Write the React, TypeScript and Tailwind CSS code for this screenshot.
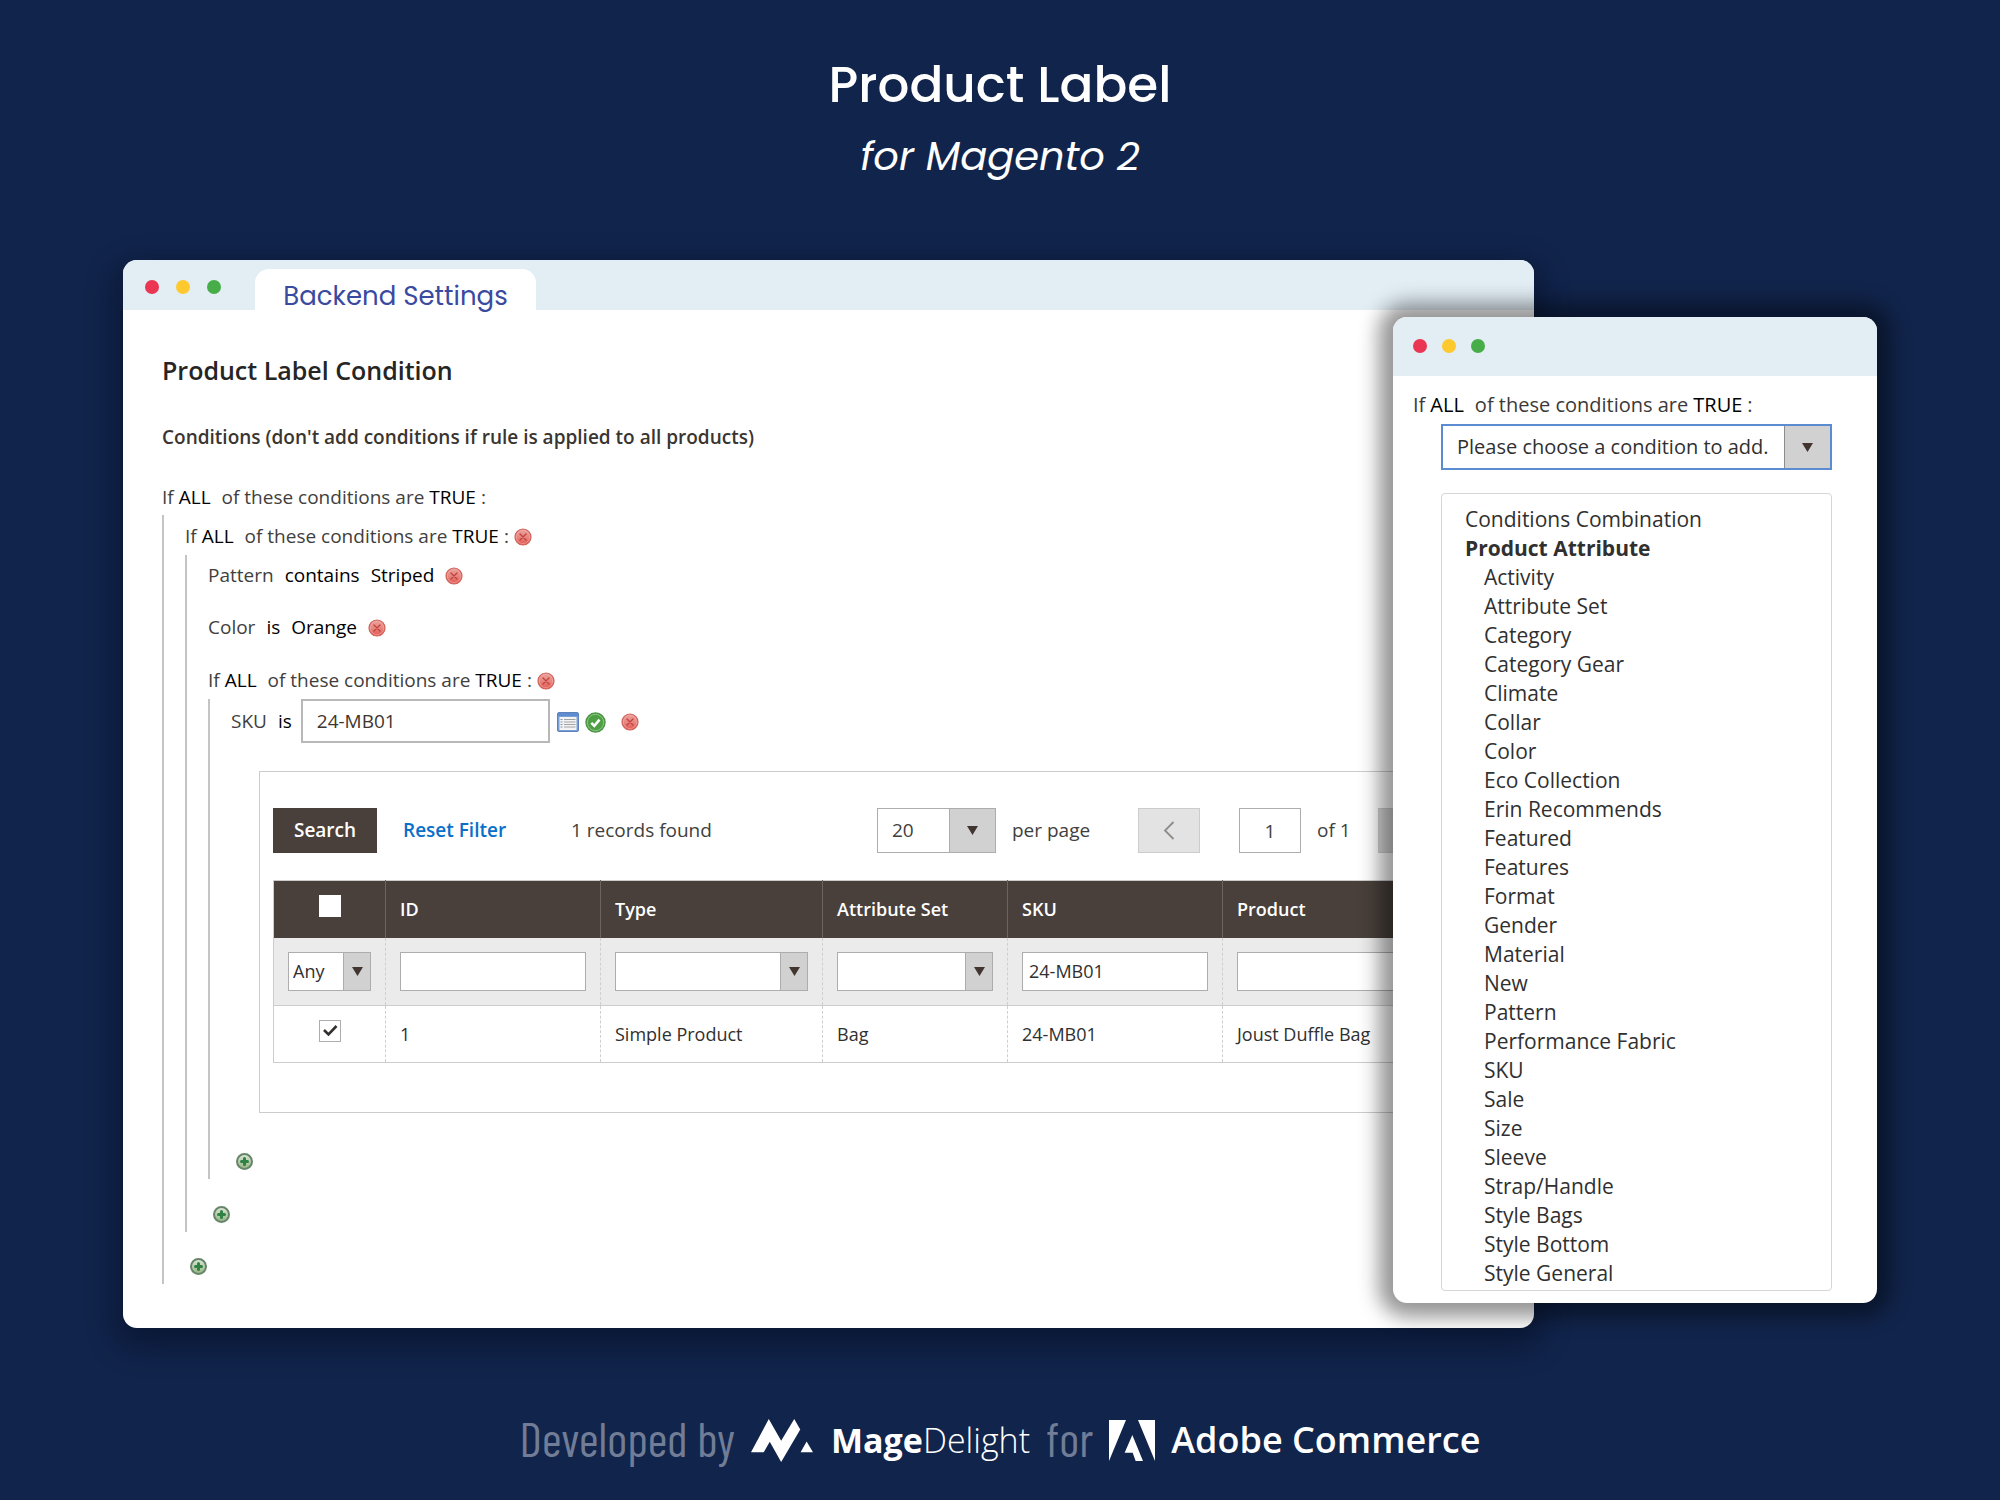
import React from 'react';

const attributes = [
  'Activity', 'Attribute Set', 'Category', 'Category Gear', 'Climate', 'Collar', 'Color',
  'Eco Collection', 'Erin Recommends', 'Featured', 'Features', 'Format', 'Gender', 'Material',
  'New', 'Pattern', 'Performance Fabric', 'SKU', 'Sale', 'Size', 'Sleeve', 'Strap/Handle',
  'Style Bags', 'Style Bottom', 'Style General',
];

function Dots({ className }: { className: string }) {
  return (
    <div className={`flex ${className}`}>
      <span className="size-3.5 rounded-full bg-[#ea3553]" />
      <span className="size-3.5 rounded-full bg-[#fdc92e]" />
      <span className="size-3.5 rounded-full bg-[#47ad48]" />
    </div>
  );
}

function RemoveButton({ className = '' }: { className?: string }) {
  return (
    <button type="button" aria-label="Remove" className={`shrink-0 pt-0.5 ${className}`}>
      <svg width="18" height="18" viewBox="0 0 18 18" className="block">
        <defs>
          <linearGradient id="removeFill" x1="0" y1="0" x2="0" y2="1">
            <stop offset="0" stopColor="#e9a39d" />
            <stop offset="0.5" stopColor="#e88680" />
            <stop offset="1" stopColor="#e0564f" />
          </linearGradient>
        </defs>
        <circle cx="9" cy="9" r="8" fill="url(#removeFill)" stroke="#d0625c" strokeWidth="1.2" />
        <circle cx="9" cy="9" r="6.6" fill="none" stroke="#f3aaa6" strokeWidth="0.6" />
        <path d="M6 6l6 6M12 6l-6 6" stroke="#c0403c" strokeWidth="1.3" strokeLinecap="round" />
      </svg>
    </button>
  );
}

function AddButton({ className }: { className: string }) {
  return (
    <button type="button" aria-label="Add condition" className={`block ${className}`}>
      <svg width="17" height="17" viewBox="0 0 17 17" className="block">
        <defs>
          <linearGradient id="addFill" x1="0" y1="0" x2="0" y2="1">
            <stop offset="0" stopColor="#dfe8da" />
            <stop offset="1" stopColor="#93b37f" />
          </linearGradient>
        </defs>
        <circle cx="8.5" cy="8.5" r="7.5" fill="url(#addFill)" stroke="#66866a" strokeWidth="2" />
        <path d="M8.5 5.500v6M5.500 8.500h6" stroke="#2f8245" strokeWidth="3" strokeLinecap="round" />
      </svg>
    </button>
  );
}

function Caret() {
  return (
    <svg width="11" height="9" viewBox="0 0 11 9">
      <path d="M0 0h11L5.500 9z" fill="#41362f" />
    </svg>
  );
}

type SelectProps = {
  label: string;
  value: string;
  box: string;
  field: string;
  caret: string;
};

function Select({ label, value, box, field, caret }: SelectProps) {
  return (
    <div className={`relative flex ${box}`}>
      <select aria-label={label} defaultValue={value} className={`h-full w-full appearance-none bg-white outline-none ${field}`}>
        <option>{value}</option>
      </select>
      <span className={`pointer-events-none absolute inset-y-0 right-0 flex items-center justify-center border-l bg-[#d1d1d1] ${caret}`}>
        <Caret />
      </span>
    </div>
  );
}

function Param({ children }: { children: React.ReactNode }) {
  return <a href="#" className="text-black">{children}</a>;
}

function Combine({ className, removable = true }: { className: string; removable?: boolean }) {
  return (
    <div className={`flex items-center whitespace-nowrap ${className}`}>
      <span className="mr-[5px]">If</span>
      <Param>ALL</Param>
      <span className="mr-[5px] ml-[11px]">of these conditions are</span>
      <Param>TRUE</Param>
      <span className="ml-[5px]">:</span>
      {removable && <RemoveButton className="ml-[5px]" />}
    </div>
  );
}

function Rule({ attribute, operator, value, className }: { attribute: string; operator: string; value: string; className: string }) {
  return (
    <div className={`flex items-center ${className}`}>
      <span>{attribute}</span>
      <span className="ml-[11px]"><Param>{operator}</Param></span>
      <span className="ml-[11px]"><Param>{value}</Param></span>
      <RemoveButton className="ml-[11px]" />
    </div>
  );
}

function RecordsGrid() {
  const th = 'border-r border-[#6b645f] px-3.5 text-left font-semibold text-white';
  const filter = 'border-r border-dashed border-r-[#cfcfcf] px-3.5';
  const td = 'border-r border-dashed border-r-[#cfcfcf] px-3.5';
  const input = 'block h-[39px] w-full border border-[#adadad] bg-white px-1.5 text-lg outline-none';
  return (
    <div className="mt-7 ml-7 border border-[#cccccc] px-[13px] pt-9 pb-[49px]">
      <div className="flex h-[45px] items-center whitespace-nowrap">
        <button type="button" className="h-full w-[104px] bg-[#49403b] font-semibold text-white">Search</button>
        <button type="button" className="ml-[26px] w-[107px] text-left font-semibold text-[#0a6fc9]">Reset Filter</button>
        <span className="ml-[61px] w-[306px]">1 records found</span>
        <Select label="Records per page" value="20" box="h-full w-[119px] shrink-0 border border-[#adadad]" field="pl-3.5" caret="w-[46px] border-[#adadad]" />
        <span className="ml-4 w-[126px]">per page</span>
        <button type="button" aria-label="Previous page" className="flex h-full w-[62px] shrink-0 items-center justify-center border border-[#cccccc] bg-[#e3e3e3]">
          <svg width="12" height="20" viewBox="0 0 12 20" fill="none" stroke="#8f8b88" strokeWidth="1.800">
            <path d="M10.500 1L2 9.500l8.500 8.500" />
          </svg>
        </button>
        <input aria-label="Page" defaultValue="1" className="ml-[39px] h-full w-[62px] shrink-0 border border-[#adadad] bg-white text-center outline-none" />
        <span className="ml-4 w-[61px]">of 1</span>
        <button type="button" aria-label="Next page" className="flex h-full w-[62px] shrink-0 items-center justify-center border border-[#cccccc] bg-[#d6d6d6]" />
      </div>
      <table className="mt-[27px] w-full table-fixed border-collapse border border-[#cccccc] text-lg text-[#303030]">
        <colgroup>
          <col className="w-[112px]" />
          <col className="w-[215px]" />
          <col className="w-[222px]" />
          <col className="w-[185px]" />
          <col className="w-[215px]" />
          <col />
        </colgroup>
        <thead>
          <tr className="h-[57px] bg-[#49403b]">
            <th className={`${th} text-center`}>
              <input type="checkbox" aria-label="Select all" className="mx-auto mb-1.5 block size-[22px] appearance-none bg-white" />
            </th>
            <th className={th}>ID</th>
            <th className={th}>Type</th>
            <th className={th}>Attribute Set</th>
            <th className={th}>SKU</th>
            <th className={th}>Product</th>
          </tr>
        </thead>
        <tbody>
          <tr className="h-[68px] border-b border-b-[#cccccc] bg-[#ebebeb]">
            <td className={filter}>
              <Select label="Filter selected" value="Any" box="h-[39px] w-full border border-[#adadad]" field="pl-1" caret="w-[27px] border-[#adadad]" />
            </td>
            <td className={filter}><input aria-label="Filter ID" className={input} /></td>
            <td className={filter}>
              <Select label="Filter type" value="" box="h-[39px] w-full border border-[#adadad]" field="pl-1" caret="w-[27px] border-[#adadad]" />
            </td>
            <td className={filter}>
              <Select label="Filter attribute set" value="" box="h-[39px] w-full border border-[#adadad]" field="pl-1" caret="w-[27px] border-[#adadad]" />
            </td>
            <td className={filter}><input aria-label="Filter SKU" defaultValue="24-MB01" className={input} /></td>
            <td className={filter}><input aria-label="Filter product" className={input} /></td>
          </tr>
          <tr className="h-[57px]">
            <td className={td}>
              <div className="relative mx-auto mb-1.5 size-[22px]">
                <input type="checkbox" aria-label="Select record 1" defaultChecked className="block size-[22px] appearance-none border border-[#adadad] bg-white" />
                <svg viewBox="0 0 22 22" className="pointer-events-none absolute inset-0" fill="none" stroke="#33302e" strokeWidth="2.600">
                  <path d="M5 10l4.500 4.500L17.500 6" />
                </svg>
              </div>
            </td>
            <td className={td}>1</td>
            <td className={td}>Simple Product</td>
            <td className={td}>Bag</td>
            <td className={td}>24-MB01</td>
            <td className={td}>Joust Duffle Bag</td>
          </tr>
        </tbody>
      </table>
    </div>
  );
}

function SkuRow() {
  return (
    <div className="flex h-11 items-center">
      <span>SKU</span>
      <span className="ml-[11px]"><Param>is</Param></span>
      <input aria-label="SKU" defaultValue="24-MB01" className="ml-[9px] h-full w-[249px] border-2 border-[#b8b8b8] bg-white px-3.5 text-[#41362f] outline-none" />
      <button type="button" aria-label="Open chooser" className="ml-[7px] pt-0.5">
        <svg width="22" height="20" viewBox="0 0 22 20" className="block">
          <rect x="0.500" y="0.500" width="21" height="19" rx="1.500" fill="#7a9fd4" stroke="#5b82bd" />
          <rect x="1" y="1" width="20" height="3" fill="#5f8ccf" />
          <rect x="2.500" y="5" width="17" height="13" fill="#f4f4f4" />
          <path d="M7 7.500h11.500M7 10h11.500M7 12.500h11.500M7 15h11.500" stroke="#a2a2a2" strokeWidth="1.200" />
          <path d="M3.500 7.500h2M3.500 10h2M3.500 12.500h2M3.500 15h2" stroke="#7f93b5" strokeWidth="1.200" />
        </svg>
      </button>
      <button type="button" aria-label="Apply" className="ml-1.5 pt-0.5">
        <svg width="21" height="21" viewBox="0 0 21 21" className="block">
          <circle cx="10.500" cy="10.500" r="9.600" fill="#4fa044" stroke="#4a9344" strokeWidth="1.200" />
          <circle cx="10.500" cy="10.500" r="8.200" fill="none" stroke="#8cc684" strokeWidth="1" />
          <path d="M6.300 10.800l3 3 5.200-6.200" fill="none" stroke="#ffffff" strokeWidth="2.600" />
        </svg>
      </button>
      <RemoveButton className="ml-[15px]" />
    </div>
  );
}

function ConditionTree() {
  const branch = 'border-l-2 border-[#c4c4c4] pl-[21px] pb-[9px]';
  return (
    <>
      <Combine className="mt-[29px] h-[34px]" removable={false} />
      <div className={`mt-px ${branch}`}>
        <Combine className="h-10 pt-0.5" />
        <div className={branch}>
          <Rule attribute="Pattern" operator="contains" value="Striped" className="h-10" />
          <Rule attribute="Color" operator="is" value="Orange" className="mt-3 h-10" />
          <Combine className="mt-3 h-10 pt-0.5" />
          <div className={branch}>
            <SkuRow />
            <RecordsGrid />
            <AddButton className="mt-10 ml-[5px]" />
          </div>
          <AddButton className="mt-[27px] ml-[5px]" />
        </div>
        <AddButton className="mt-[26px] ml-[5px]" />
      </div>
    </>
  );
}

function SettingsWindow() {
  return (
    <section className="min-w-0 flex-1 overflow-hidden rounded-[14px] bg-white text-[19px] text-[#41403e] shadow-[0_12px_28px_8px_rgba(5,12,32,0.450)]">
      <div className="flex h-[50px] items-end bg-[#e2edf4]">
        <Dots className="mb-4 ml-[22px] gap-[17px]" />
        <h2 className="ml-[34px] flex h-[41px] w-[281px] items-center justify-center rounded-t-[14px] bg-white pt-3.5 font-['Poppins','Inter',sans-serif] text-[26px] font-normal text-[#3a4a9f]">
          Backend Settings
        </h2>
      </div>
      <div className="pt-11 pr-8 pb-[44px] pl-[39px]">
        <h3 className="text-[25px] leading-8 font-semibold text-[#252525]">Product Label Condition</h3>
        <p className="mt-[37px] leading-7 font-semibold text-[#3a3530]">
          Conditions (don't add conditions if rule is applied to all products)
        </p>
        <ConditionTree />
      </div>
    </section>
  );
}

function ChooserWindow() {
  return (
    <section className="z-10 mt-[57px] -ml-[141px] w-[484px] shrink-0 self-start rounded-[14px] bg-white text-xl text-[#3b3a38] shadow-[0_0_20px_14px_rgba(0,0,0,0.420)]">
      <div className="flex h-[59px] items-center rounded-t-[14px] bg-[#e2edf4] pb-0.5">
        <Dots className="ml-5 gap-[15px]" />
      </div>
      <div className="pt-[11px] pr-[45px] pb-3 pl-5">
        <Combine className="h-9" removable={false} />
        <Select
          label="Condition to add"
          value="Please choose a condition to add."
          box="mt-px ml-7 h-[46px] border-2 border-[#5b8bd0]"
          field="pl-3.5 text-[#303030]"
          caret="w-[46px] border-[#8c8c8c]"
        />
        <ul role="listbox" aria-label="Conditions" className="mt-[23px] ml-7 rounded-sm border border-[#d6d6d6] pt-[11px] pb-0.5 text-[21px] leading-[29px] text-[#303030]">
          <li role="option" className="pl-[23px]">Conditions Combination</li>
          <li role="presentation" className="pl-[23px] font-bold">Product Attribute</li>
          {attributes.map((name) => (
            <li key={name} role="option" className="pl-[42px]">{name}</li>
          ))}
        </ul>
      </div>
    </section>
  );
}

function Footer() {
  const muted = "pb-1 font-['Barlow_Condensed','Roboto_Condensed','Roboto',sans-serif] text-5xl text-[#717d96]";
  return (
    <footer className="mt-[84px] flex h-14 items-center justify-center whitespace-nowrap">
      <span className={muted}>Developed by</span>
      <svg width="62" height="43" viewBox="0 0 185 128" fill="#ffffff" className="ml-4" aria-hidden="true">
        <path d="M0 99L53 0l37 65L129 0l18 31-57 97-34-60-18 31zM148 99l18-32 19 32z" />
      </svg>
      <span className="ml-[18px] text-[34px] text-white">
        <span className="font-bold">Mage</span>
        <span className="font-light">Delight</span>
      </span>
      <span className={`ml-4 ${muted}`}>for</span>
      <svg width="46" height="41" viewBox="0 0 138 123" fill="#ffffff" className="ml-4" aria-hidden="true">
        <path d="M0 0h51L0 123zM87 0h51v123zM70 45l32 78H80l-9-25H47z" />
      </svg>
      <span className="ml-4 text-4xl font-semibold text-white">Adobe Commerce</span>
    </footer>
  );
}

export default function App() {
  return (
    <div className="flex min-h-screen flex-col bg-[#11244b] font-['Open_Sans','Noto_Sans',sans-serif]">
      <header className="h-[260px] pt-[55px] text-center font-['Poppins','Inter',sans-serif] text-white">
        <h1 className="text-[50px] leading-[60px] font-medium">Product Label</h1>
        <p className="mt-[17px] text-[40px] leading-[48px] font-normal italic">for Magento 2</p>
      </header>
      <main className="flex px-[123px]">
        <SettingsWindow />
        <ChooserWindow />
      </main>
      <Footer />
    </div>
  );
}
